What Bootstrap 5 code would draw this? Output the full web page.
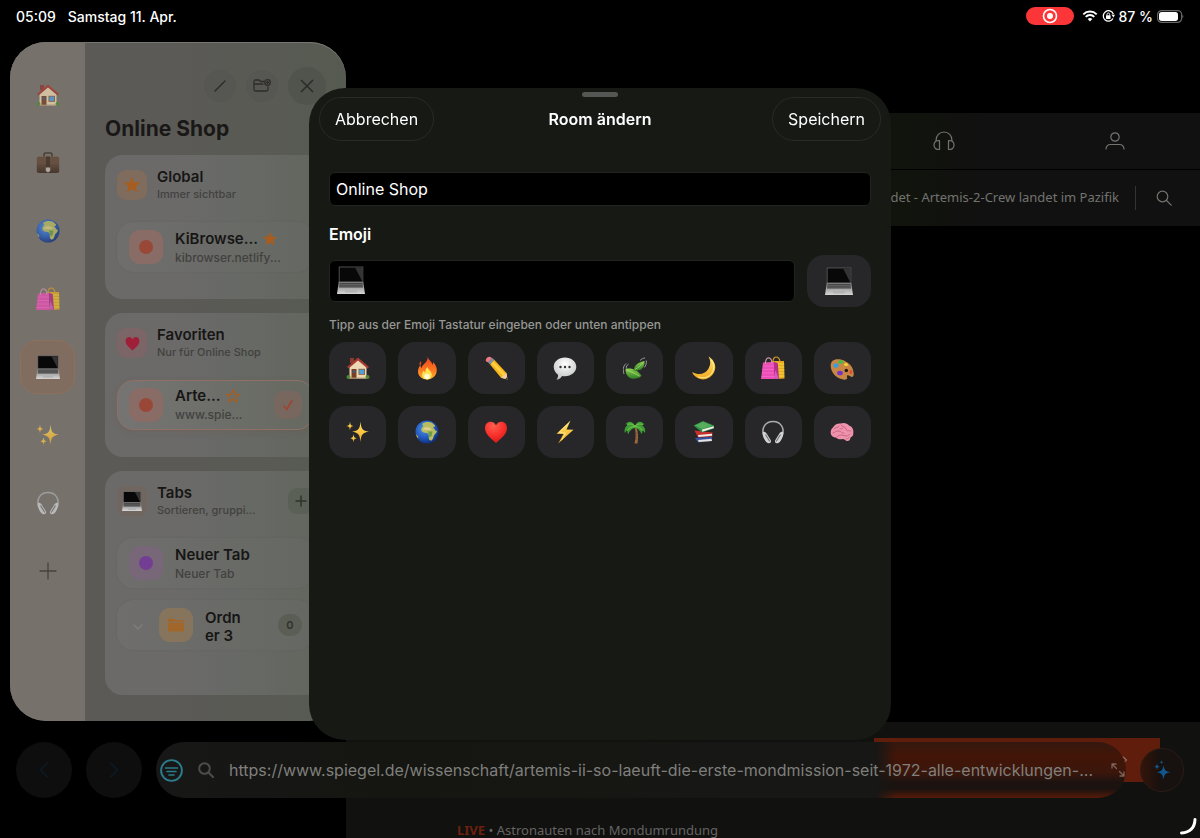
<!DOCTYPE html>
<html lang="de">
<head>
<meta charset="utf-8">
<meta name="viewport" content="width=device-width, initial-scale=1">
<title>Room ändern</title>
<link href="https://cdn.jsdelivr.net/npm/bootstrap@5.3.0/dist/css/bootstrap.min.css" rel="stylesheet">
<style>
  body { background: #000; color: #fff; font-family: Inter, "Liberation Sans", sans-serif; font-size: 16px; overflow: hidden; }
  a { text-decoration: none; }
  button { border: 0; padding: 0; color: inherit; }
  svg { display: block; flex: none; }
  .line { fill: none; stroke: currentColor; stroke-linecap: round; stroke-linejoin: round; }
  .e16 { width: 16px; height: 16px; } .e20 { width: 20px; height: 20px; }
  .e24 { width: 24px; height: 24px; } .e28 { width: 28px; height: 28px; }

  /* status bar */
  .status { height: 42px; padding: 0 16px 10px; font-size: 14px; font-weight: 500; }
  .rec { width: 48px; height: 18px; background: #fc3638; }

  /* sidebar */
  .side { width: 336px; margin: 0 0 117px 10px; border-radius: 36px; overflow: hidden; background: linear-gradient(90deg, #5c5a57 30%, #5a5a55 65%, #565b51); box-shadow: inset 0 1px #777672; z-index: 1; }
  .rail { width: 75px; padding-top: 26px; gap: 14px; background: #77716b; }
  .rail button { width: 55px; height: 54px; border-radius: 17px; background: none; color: #45423e; }
  .rail svg { opacity: .75; }
  .rail .on { background: #806d60; border: 1px solid #8f705c; }
  .rail .on svg, .rail .full { opacity: 1; }
  .panel { padding: 25px 20px 26px; min-width: 0; }
  .tools { gap: 10px; }
  .tool { width: 32px; height: 32px; background: #565652; color: #2d2c2a; }
  .tool.big { width: 38px; height: 38px; background: #51544c; }
  .panel h1 { font-size: 21px; line-height: 28px; font-weight: 700; color: #191817; margin: 10px 0 12px; }
  .groups { gap: 14px; }
  .group { border-radius: 18px; background: linear-gradient(90deg, #6b6a69 30%, #676965 65%, #61665d); padding: 15px 12px 27px; }
  .gicon { width: 30px; height: 30px; border-radius: 9px; background: #70665f; }
  .gicon.amber { background: #7f6c5d; } .gicon.rose { background: #7b6566; }
  .ghead { gap: 10px; margin-bottom: 22px; height: 30px; }
  .t1 { font-size: 15px; line-height: 18px; font-weight: 600; color: #171615; white-space: nowrap; }
  .t2 { font-size: 12px; line-height: 18px; font-weight: 500; color: #42413f; white-space: nowrap; }
  .ghead .t2 { font-size: 11px; line-height: 16px; }
  .entry .t2 { line-height: 20px; }
  .entry { height: 50px; border-radius: 17px; padding: 3px 12px 0; gap: 12px; background: linear-gradient(90deg, #6f6e6d, #656862); box-shadow: 0 0 3px #0000000f; }
  .entry.on { background: linear-gradient(90deg, #757473, #666960); border: 1px solid #8f7067; padding: 2px 11px 0; box-shadow: 0 2px 6px #7a403026; }
  .entry + .entry { margin-top: 12px; }
  .eicon { width: 34px; height: 34px; border-radius: 11px; margin-top: -3px; }
  .disc { width: 14px; height: 14px; }
  .salmon { background: #8a6c66; } .salmon .disc { background: #994838; }
  .lilac { background: #786779; } .lilac .disc { background: #743d94; }
  .ochre { background: #86755c; }
  .check { width: 28px; height: 28px; border-radius: 9px; background: #78675f; color: #9f4430; margin-top: -3px; }
  .plus { width: 26px; height: 26px; border-radius: 9px; background: #5b6057; color: #30322d; }
  .count { width: 24px; height: 22px; font-size: 11px; font-weight: 600; background: #5a5e55; color: #30322d; margin-top: -3px; }

  /* web page behind */
  .web { font-family: "Noto Sans", sans-serif; padding-top: 71px; min-width: 0; color: #626260; }
  .band { height: 56px; background: linear-gradient(90deg, #11140c 65%, #111 75%); color: #73736f; }
  .band + .band { margin-top: 1px; }
  .band > .fifth { width: 20%; }
  .ticker { font-size: 13px; }
  .vr-line { width: 1px; height: 24px; background: #333; }
  .story { height: 116px; background: #111110; }
  .promo { width: 286px; height: 44px; margin: 16px 40px 0 0; background: #611d0b; color: #8d6f67; padding-right: 32px; }
  .live { font-size: 13px; line-height: 16px; margin: 40px 0 0 111px; color: #646462; }
  .live b { color: #6b210e; }

  /* floating address bar */
  .dock { bottom: 40px; padding: 0 16px; gap: 14px; z-index: 2; }
  .round { width: 56px; height: 56px; background: #0e0e0e; color: #0c1b27; }
  .address { height: 56px; min-width: 0; gap: 15px; padding: 0 1px 0 4px; background:
      linear-gradient(90deg, #161715, #16171500) right 230px top / 20px 100% no-repeat,
      linear-gradient(#34180f, #431508 25%, #3a160b 55%, #1c1310 72%, #1c1310 84%, #571a09) right top / 250px 100% no-repeat,
      linear-gradient(90deg, #171717, #151611 25%, #171715 60%); }
  .address input { font-size: 16px; border: 0; background: none; color: #7f7f7c; min-width: 0; padding: 0; }
  .spark { width: 44px; height: 44px; background: linear-gradient(90deg, #351409, #17110f 45%); border: 1px solid #2b1c17; }
  .turn { right: 3px; bottom: 3px; z-index: 3; }

  /* sheet */
  .modal-dialog { max-width: 582px; margin: 88px auto 0; }
  .sheet { border: 0; border-radius: 36px; background: #171915; min-height: 652px; padding: 4px 10px 0; color: #fff; }
  .grab { width: 36px; height: 5px; background: #545754; }
  .pill { height: 44px; padding: 0 15px; border: 1px solid #292b25; background: #171915; font-size: 16px; }
  .sheet-title { font-size: 16px; line-height: 20px; font-weight: 600; }
  .fields { padding: 31px 10px 0; }
  .field { background: #000; border: 1px solid #22241f; border-radius: 6px; color: #fff; padding: 0 6px; font-size: 16px; box-shadow: none; }
  .field:focus { background: #000; color: #fff; }
  .h34 { height: 34px; } .h42 { height: 42px; }
  .lab { font-size: 16px; line-height: 20px; font-weight: 600; margin: 18px 0 11px; }
  .pick { gap: 12px; }
  .glyph { left: 8px; top: 6px; }
  .tile { height: 52px; border-radius: 17px; background: #272729; }
  .tile.wide { width: 64px; }
  .hint { font-size: 12px; line-height: 16px; font-weight: 500; color: #969794; margin: 10px 0 9px; }
  .tiles { display: grid; grid-template-columns: repeat(8, 1fr); gap: 12px; }
</style>
</head>
<body>

<svg width="0" height="0" class="position-absolute" aria-hidden="true">
  <defs>
    <linearGradient id="gFire" x1="0" y1="0" x2="0" y2="1"><stop offset="0" stop-color="#f0401c"/><stop offset=".6" stop-color="#fb7a20"/><stop offset="1" stop-color="#fdb52c"/></linearGradient>
    <linearGradient id="gGold" x1="0" y1="0" x2="0" y2="1"><stop offset="0" stop-color="#ffe36a"/><stop offset="1" stop-color="#f3a81f"/></linearGradient>
    <radialGradient id="gSea" cx=".4" cy=".35" r=".7"><stop offset="0" stop-color="#4b96e8"/><stop offset=".6" stop-color="#2257bd"/><stop offset="1" stop-color="#0c2a72"/></radialGradient>
    <radialGradient id="gHeart" cx=".4" cy=".2" r=".9"><stop offset="0" stop-color="#ff5f50"/><stop offset=".5" stop-color="#f8302b"/><stop offset="1" stop-color="#cf1518"/></radialGradient>
    <radialGradient id="gBub" cx=".5" cy=".3" r=".8"><stop offset="0" stop-color="#fff"/><stop offset="1" stop-color="#b9babb"/></radialGradient>
    <linearGradient id="gKey" x1="0" y1="0" x2="0" y2="1"><stop offset="0" stop-color="#777"/><stop offset="1" stop-color="#d6d6d6"/></linearGradient>
    <linearGradient id="gLeaf" x1="0" y1="0" x2="0" y2="1"><stop offset="0" stop-color="#8bd04e"/><stop offset="1" stop-color="#2f7d24"/></linearGradient>
    <linearGradient id="gCase" x1="0" y1="0" x2="0" y2="1"><stop offset="0" stop-color="#76563f"/><stop offset="1" stop-color="#38251a"/></linearGradient>
  </defs>
  <symbol id="house" viewBox="0 0 24 24"><path d="M4 2h4v5H4z" fill="#8c3a30"/><path d="M3.500 10 12 3l8.500 7v12.500h-17z" fill="#ecd9b4"/><path d="M12 1.500 23 11l-1.500 1.500L12 4.500 2.500 12.500 1 11z" fill="#a83a32"/><path d="M5.500 13h5v9.500h-5z" fill="#7a4027"/><path d="M6.700 14.300h2.600v2.700H6.700z" fill="#3d5d78"/><path d="M12.500 12.800h6.500v6h-6.500z" fill="#8b5a38"/><path d="M13.300 13.600h4.900v4.400h-4.900z" fill="#4f9fdb"/><circle cx="2.500" cy="21" r="2" fill="#4f8b2f"/><circle cx="21.500" cy="21" r="2" fill="#4f8b2f"/><path d="M3.500 21.600h17v1h-17z" fill="#b39a78"/></symbol>
  <symbol id="fire" viewBox="0 0 24 24"><path d="M12.500.5c.6 3 4.700 5.200 5 8.500.5-.8.700-2 .500-3 3 3 4.500 6.500 3.500 10.500-1 4-5 7-9.300 7-5 0-9.200-3.300-9.200-8 0-3 1-4.500 2.300-6.500.3 1.500.7 2.300 1.400 3C7 8 13.500 6.500 12.500.5z" fill="url(#gFire)"/><path d="M4.500 7.500c0 1 .2 1.600.7 2.300.9-1.300 1.300-2.800.8-4.600-.8.700-1.500 1.500-1.500 2.300z" fill="#f0481d"/><path d="M12.500 11c.4 2.600 4.300 4.300 4.300 7.800 0 3-2.200 4.700-4.700 4.700-2.600 0-5-1.700-5-4.700 0-2 .9-3 1.700-4.200.3 1 .8 1.600 1.400 2 .2-2.200.5-4.200 2.300-5.600z" fill="#ffe052"/><ellipse cx="12" cy="20.500" rx="2.800" ry="2.800" fill="#fffbd0"/></symbol>
  <symbol id="pencil" viewBox="0 0 24 24"><path d="m6 8.500 4-5L22.500 17l.8 6.300-6.300-1.500z" fill="#f5b41e"/><path d="m7.300 7.500 1.800-2.300L21.500 18l-2.200 2.200z" fill="#ffcf3d"/><path d="m6 8.500-1.800-2L8.300 2l1.900 1.800z" fill="#8295a8"/><path d="M4.200 6.500 2 5.200C.8 3.500 3.500.2 5.600.7L8.300 2z" fill="#ec7b86"/><path d="m17 21.800 5.500-4.800 1 6.500z" fill="#eecfa2"/><path d="m21.300 22.900 1.900-1.800.3 2.400z" fill="#343434"/></symbol>
  <symbol id="bubble" viewBox="0 0 24 24"><path d="M12 1.500c6.300 0 11.300 4 11.300 9.300s-5 9.400-11.300 9.400c-1 0-2-.1-2.900-.3-1 1.800-2.900 3.300-5.600 3.800 1.300-1.500 1.700-3.200 1.500-5C2.500 17 .7 14.200.7 10.800.7 5.500 5.700 1.500 12 1.500z" fill="url(#gBub)"/><g fill="#333"><circle cx="7.500" cy="11" r="1.200"/><circle cx="12" cy="11" r="1.200"/><circle cx="16.500" cy="11" r="1.200"/></g></symbol>
  <symbol id="leaf" viewBox="0 0 24 24"><path d="M2.500 13C8 11.500 15 14 18.500 20c-3.500 3-10 4-13 1C3.500 19 2.300 16 2.500 13z" fill="url(#gLeaf)"/><path d="M10.500 14.500c1-5.500 5-8.500 11-9.500.5 6.500-4 10.500-11 9.500z" fill="url(#gLeaf)"/><path d="M3.500 14c4 1.500 8.500 3.500 13 6M12 13.500c3-1.500 6-4.500 8-7" fill="none" stroke="#b7e27f" stroke-width=".7"/><path d="M1 18C-.3 13.500 0 10.500 3 7.500M3.200 12.500c0-2 .8-3.500 2.300-4.500M17 4.500c1.500-1.500 3-2.300 5-2.500M23.300 4.500c.3 3-.3 5-2 7" fill="none" stroke="#a5aaa5" stroke-width=".9"/></symbol>
  <symbol id="moon" viewBox="0 0 24 24"><path d="M16.500.5c6 3.500 8.500 10 5.500 15.800C18.500 23.500 10 25.500 4 21c-2-1.500-3.200-3-3.700-5 6 3.500 12.500 2.500 16-3 2.500-4 2.500-8.500.2-12.500z" fill="url(#gGold)"/><path d="M19 4c3 4 3.500 8.500 1.200 12.500-3 5-8.700 6.500-14 4.300" fill="none" stroke="#fff0a0" stroke-width="1"/></symbol>
  <symbol id="bags" viewBox="0 0 24 24"><path d="M11 5h12l.5 17.500-8 .5z" fill="#e4ac1e"/><path d="M12 8h11.200M12 11h11.200M12 14h11.300M12 17h11.300M12 20h11.300" stroke="#f7d84a" stroke-width="1.200"/><path d="M12 5.500c0-6 6-6 7 0" fill="none" stroke="#d99c28" stroke-width="1.200"/><path d="m2 6.500 11.500-.8L16.500 23H0z" fill="#eb4fb7"/><path d="m13 5.800 3.800 1.500L18 23h-5z" fill="#b52f8b"/><path d="m14.500 14 3.200 8.800H12.500z" fill="#d95bb8"/><path d="M4.500 8C4 0 10.500 0 11 7.500" fill="none" stroke="#c99aa8" stroke-width="1.200"/><path d="M2 10h11M1.600 13.500h11.500M1 17h12M.5 20.500h12.500" stroke="#ff7bd0" stroke-width=".5"/></symbol>
  <symbol id="palette" viewBox="0 0 24 24"><path d="M3 4.500C8 1.500 17 4 21.500 10.500 23.500 14 24.500 19 23 20.500c-1.600 1.500-4-1.800-5.500-1.200-1.500.5.700 3.200-1 4-2.500 1-8-.3-11.500-3.800C.5 15-1 7.500 3 4.500z" fill="#c88743"/><ellipse cx="6" cy="9.500" rx="2.600" ry="2.300" fill="#3c9ce0"/><ellipse cx="10.800" cy="6" rx="2.500" ry="1.900" fill="#43bd46"/><ellipse cx="16" cy="8.500" rx="2" ry="1.600" fill="#f5d331"/><ellipse cx="10" cy="17" rx="2.900" ry="2.300" fill="#7634c4"/><ellipse cx="20.800" cy="16" rx="1.500" ry="1.900" fill="#e5483b"/><circle cx="16.300" cy="14.500" r="1.800" fill="#241b12"/></symbol>
  <symbol id="sparkles" viewBox="0 0 24 24"><g fill="url(#gGold)"><path d="M14.500 1.500c.7 7.300 1.800 9.500 8.500 10.200-6.700.8-7.800 3-8.500 10.300-.7-7.300-1.800-9.500-8.500-10.300 6.700-.7 7.800-2.900 8.500-10.200z"/><path d="M4 1.500c.3 3.200.8 4.100 3.500 4.500-2.700.4-3.200 1.300-3.500 4.500C3.700 7.300 3.200 6.400.5 6 3.200 5.600 3.700 4.700 4 1.500z"/><path d="M7.500 14c.3 3 .8 3.800 3.300 4.200-2.500.4-3 1.200-3.300 4.300-.3-3.100-.8-3.900-3.300-4.300 2.500-.4 3-1.200 3.300-4.200z"/></g></symbol>
  <symbol id="globe" viewBox="0 0 24 24"><circle cx="12" cy="12" r="11.500" fill="url(#gSea)"/><path d="M7.500 3.500c2-2 7-2 9.500-.8l3 2.800c.5 1.500-1 1.300-2 1.500l2.500 3.500 1.500.5c-.5 2.500-2.300 3-3 4.500s-.5 3-2 4.500c-1 1-2.500.5-3-1-.6-1.800.2-3.300-.7-5C12.500 12.500 9 13.500 7 11.500 5.500 9.500 7 7 8.500 6c-.8-.8-1.500-1.500-1-2.500z" fill="#b8bd62"/><path d="M8.500 8c2-1.500 6-1 8 1l-1 1.500c-2.500-.8-5-.3-7.500-.5z" fill="#ddd08d"/><path d="M13 11.500h4.500l-1 4.500-2 1.500z" fill="#6c9c45"/><path d="M1 14.500c1.500.5 2.500 2 2.200 4L2 17z" fill="#c7b83e"/></symbol>
  <symbol id="heart" viewBox="0 0 24 24"><path d="M12 23C6 17.500 1 14 1 8c0-4 2.500-6.300 5.700-6.300 2.500 0 4.500 1.500 5.300 3.800.8-2.300 2.800-3.800 5.300-3.800C20.500 1.700 23 4 23 8c0 6-5 9.500-11 15z" fill="url(#gHeart)"/></symbol>
  <symbol id="bolt" viewBox="0 0 24 24"><path d="m17.500.5-14 13.300 7 .2-5.300 9.500L20.500 9.800l-7-.3z" fill="url(#gGold)"/><path d="M15.500 3.500 6 12.500l6.500.5-4 7.300" fill="none" stroke="#fff09a" stroke-width=".8"/></symbol>
  <symbol id="palm" viewBox="0 0 24 24"><path d="M11.500 7c1.500 5 1.500 10.500 0 16.500h3c1-6 .8-11.500-1.200-16.500z" fill="#9a6a3c"/><path d="M12 13h2.500M12 16h2.500M12 19h2.500" stroke="#6b4423" stroke-width=".7"/><path d="M12 6C9.500 1 5 .5 2.500 4.500 4 4 5 4.300 5.500 4.800 2.500 6 1 9 1.800 13c1-1.500 1.700-2.300 2.700-2.600-.2 1.500 0 2.700.7 3.800C7 10 9.500 8.500 12 8c2.500.5 5 2 6.500 6 .8-1 1-2.200.8-3.500 1.200.4 2 1.500 2.700 2.700.8-4-.7-7.200-3.700-8.200.8-.5 2-.7 3.200-.3C19 .5 14 .5 12 6z" fill="#3f9c34"/><path d="M12 6C9 3.500 6.500 3.500 4 5M12 6.500C8.500 6.500 6 8 4.500 10.500M12 6c3-2.500 5.500-2.500 8-1M12 6.500c3.500 0 6 1.500 7.300 4" fill="none" stroke="#84cf56" stroke-width=".8"/></symbol>
  <symbol id="books" viewBox="0 0 24 24"><path d="m3 18 3 4.500 14-1.500v-4.500z" fill="#334f9f"/><path d="m6 20 13.500-1.300.5 2.200L6.700 22z" fill="#e6e3db"/><path d="m2.500 10.500 3.500 7 14.500-1v-4z" fill="#c72e2e"/><path d="m6 15 14-1.200v2L6.500 17z" fill="#efece4"/><path d="M1.500 5.500 11 1l11 4.500v3L10 12.500z" fill="#2f8f48"/><path d="m3 5.500 8-3.700L20.500 5.700 9.800 9z" fill="#56ad5b"/><path d="m10 9.500 11.700-3.300.2 1.900L10.200 11.700z" fill="#f1eee5"/></symbol>
  <symbol id="phones" viewBox="0 0 24 24"><path d="M3 16C-.5 7.500 5 1.500 12 1.500S24.500 7.500 21 16" fill="none" stroke="#a9acae" stroke-width="1.500"/><path d="M1.800 12c1-.6 2.800 0 4 1.700l4 6.500c.8 1.600-.3 3.300-2 3-1.500-.2-2.500-1-3.500-2.500C2.500 18 1 14.500 1.800 12z" fill="#d0d2d3"/><path d="M22.200 12c-1-.6-2.800 0-4 1.700l-4 6.500c-.8 1.600.3 3.300 2 3 1.500-.2 2.500-1 3.500-2.500 1.800-2.700 3.300-6.200 2.500-8.700z" fill="#d0d2d3"/><path d="m4.500 14.500 4.300 7M19.500 14.500l-4.300 7" stroke="#74787b" stroke-width="1.200"/></symbol>
  <symbol id="brain" viewBox="0 0 24 24"><path d="M3 7.500C4.500 4.500 8 3 10.500 3.500c3-1.300 7-.5 8.500 2 3 .8 4.800 4 4.300 7 .4 2.500-1 4.500-2.800 5-.2 2.700-2 4-3.500 3.500-1.500-.3-2-1.500-4-2-3 .8-6 0-7-1.500-3.500 0-5.500-2.500-5.300-5.500C.9 10 1.700 8.300 3 7.500z" fill="#ee93ad"/><path d="M4 9c2-2 4-1 5-3M3 13c2-.5 3-2.500 6-2s2 2.500 5 2M11 5c1 2 4 1 5 4s3 1 5 2M7 17c1-2 4-2.500 7-1.500s4 .5 6-1.500M13 8c-1 1-2 1-3 .5M16 19c1 0 2-.5 3-1.500" fill="none" stroke="#c8607f" stroke-width=".9" stroke-linecap="round"/></symbol>
  <symbol id="case" viewBox="0 0 24 24"><path d="M8 6V3.200C8 2.300 8.500 2 9.500 2h5c1 0 1.500.3 1.500 1.200V6" fill="none" stroke="#3d3028" stroke-width="1.600"/><rect x=".8" y="5.500" width="22.400" height="16.500" rx="2" fill="url(#gCase)"/><path d="M1 6h22l-.5 7H1.500z" fill="#5f4534"/><path d="M10 5.500h4V17h-4z" fill="#3c2a20"/><path d="M9.800 16.500h4.400v3.500L12 21.500 9.800 20z" fill="#bdb8b0"/></symbol>
  <symbol id="laptop" viewBox="0 0 24 24"><path d="M1.500.5h21v14h-21z" fill="#5f5f60"/><path d="M2.200 1.200h19.600v12.300H2.200z" fill="#080808"/><path d="M15.500 1.200h6.300v12.300z" fill="#333"/><path d="M1.500 13.500h21L24 24H0z" fill="url(#gKey)"/><path d="M2.300 14.500h19.400l.6 4H1.700z" fill="#444"/><path d="M2.200 15.800h19.600M2 17.200h20" stroke="#888" stroke-width=".4"/><path d="M7 19.500h10v3.200H7z" fill="#b3b3b3"/></symbol>
  <symbol id="star" viewBox="0 0 24 24"><path d="M12 1 14.800 8.600 22.900 8.900 16.600 14 18.800 21.800 12 17.300 5.200 21.800 7.400 14 1.100 8.900 9.200 8.600z"/></symbol>
  <symbol id="lens" viewBox="0 0 16 16"><circle cx="6.500" cy="6.500" r="5.300" class="line"/><path d="m10.500 10.500 4.700 4.700" class="line"/></symbol>
</svg>

<div class="min-vh-100 d-flex flex-column position-relative">
  <header class="status d-flex align-items-center justify-content-between">
    <div class="d-flex gap-2"><span>05:09</span><span class="ms-1">Samstag 11. Apr.</span></div>
    <div class="d-flex align-items-center">
      <span class="rec rounded-pill d-flex align-items-center justify-content-center me-2"><svg width="16" height="16" viewBox="0 0 16 16"><circle cx="8" cy="8" r="6.500" fill="none" stroke="#fff" stroke-width="1.600"/><circle cx="8" cy="8" r="3" fill="#fff"/></svg></span>
      <svg width="16" height="12" viewBox="0 0 16 12" class="me-1"><path d="M1.300 4.300a9.500 9.500 0 0 1 13.400 0M3.700 6.800a6 6 0 0 1 8.600 0" fill="none" stroke="#fff" stroke-width="1.900"/><path d="M8 11.500 5.700 9.100a3.300 3.300 0 0 1 4.600 0z" fill="#fff"/></svg>
      <svg width="13" height="14" viewBox="0 0 13 14" class="me-1"><path d="M11.300 5A5.200 5.200 0 1 0 11 9.500" fill="none" stroke="#fff" stroke-width="1.300"/><path d="m9.300 5.500 3.700.2-1.500 2.800z" fill="#fff"/><rect x="4" y="6.300" width="4.600" height="3.600" rx=".6" fill="#fff"/><path d="M5 6.500V5.300a1.300 1.300 0 0 1 2.600 0v1.200" fill="none" stroke="#fff" stroke-width=".9"/></svg>
      <span class="me-1">87 %</span>
      <svg width="27" height="13" viewBox="0 0 27 13"><rect x=".6" y=".6" width="24" height="11.800" rx="4" fill="none" stroke="#666" stroke-width="1.200"/><rect x="2" y="2" width="19" height="9" rx="2.700" fill="#fff"/><path d="M25.500 4.500q1.600 2 0 4z" fill="#777"/></svg>
    </div>
  </header>

  <div class="d-flex flex-grow-1">
    <aside class="side d-flex flex-shrink-0">
      <nav class="rail d-flex flex-column align-items-center flex-shrink-0" aria-label="Rooms">
        <button class="d-flex align-items-center justify-content-center" aria-label="Zuhause"><svg class="e24"><use href="#house"/></svg></button>
        <button class="d-flex align-items-center justify-content-center" aria-label="Arbeit"><svg class="e24"><use href="#case"/></svg></button>
        <button class="d-flex align-items-center justify-content-center" aria-label="Welt"><svg class="e24"><use href="#globe"/></svg></button>
        <button class="d-flex align-items-center justify-content-center" aria-label="Einkaufen"><svg class="e24"><use href="#bags"/></svg></button>
        <button class="on d-flex align-items-center justify-content-center" aria-label="Online Shop"><svg class="e24"><use href="#laptop"/></svg></button>
        <button class="d-flex align-items-center justify-content-center" aria-label="Neues"><svg class="e24"><use href="#sparkles"/></svg></button>
        <button class="d-flex align-items-center justify-content-center" aria-label="Musik"><svg class="e24"><use href="#phones"/></svg></button>
        <button class="d-flex align-items-center justify-content-center" aria-label="Room hinzufügen"><svg class="full line" width="18" height="18" viewBox="0 0 18 18" stroke-width="1.300"><path d="M9 1v16M1 9h16"/></svg></button>
      </nav>
      <div class="panel flex-grow-1 d-flex flex-column">
        <div class="tools d-flex align-items-center justify-content-end">
          <button class="tool rounded-circle d-flex align-items-center justify-content-center" aria-label="Bearbeiten"><svg class="line" width="14" height="14" viewBox="0 0 14 14" stroke-width="1.500"><path d="m2 12 8.500-8.500M11.500 2.500l.5-.5"/></svg></button>
          <button class="tool rounded-circle d-flex align-items-center justify-content-center" aria-label="Neuer Ordner"><svg class="line" width="18" height="16" viewBox="0 0 18 16" stroke-width="1.300"><path d="M10.500 3.500H7.500L6 2H2.500Q1 2 1 3.500v8Q1 13 2.500 13h11q1.500 0 1.500-1.500V9M1 6h9"/><circle cx="14.500" cy="4.500" r="2.800"/><path d="M14.500 3.500v2M13.500 4.500h2"/></svg></button>
          <button class="tool big rounded-circle d-flex align-items-center justify-content-center" aria-label="Schließen"><svg class="line" width="14" height="14" viewBox="0 0 14 14" stroke-width="1.700"><path d="m1.500 1.500 11 11M12.500 1.500l-11 11"/></svg></button>
        </div>
        <h1>Online Shop</h1>
        <div class="groups d-flex flex-column flex-grow-1">
          <section class="group">
            <div class="ghead d-flex align-items-center">
              <span class="gicon amber d-flex align-items-center justify-content-center"><svg width="18" height="18" fill="#a85d1e"><use href="#star"/></svg></span>
              <div><div class="t1">Global</div><div class="t2">Immer sichtbar</div></div>
            </div>
            <div class="entry d-flex align-items-center">
              <span class="eicon salmon d-flex align-items-center justify-content-center"><i class="disc rounded-circle"></i></span>
              <div><div class="t1 d-flex align-items-center gap-1">KiBrowse...<svg class="e16" fill="#a85d1e"><use href="#star"/></svg></div><div class="t2">kibrowser.netlify...</div></div>
            </div>
          </section>
          <section class="group">
            <div class="ghead d-flex align-items-center">
              <span class="gicon rose d-flex align-items-center justify-content-center"><svg width="15" height="15" viewBox="0 0 24 24"><path d="M12 23C6 17.500 1 14 1 8c0-4 2.500-6.300 5.700-6.300 2.500 0 4.500 1.500 5.300 3.800.8-2.300 2.800-3.800 5.300-3.800C20.500 1.700 23 4 23 8c0 6-5 9.500-11 15z" fill="#a01f38"/></svg></span>
              <div><div class="t1">Favoriten</div><div class="t2">Nur für Online Shop</div></div>
            </div>
            <div class="entry on d-flex align-items-center">
              <span class="eicon salmon d-flex align-items-center justify-content-center"><i class="disc rounded-circle"></i></span>
              <div><div class="t1 d-flex align-items-center gap-1">Arte...<svg class="e16" viewBox="0 0 24 24" fill="none" stroke="#a85d1e" stroke-width="1.800" stroke-linejoin="round"><path d="M12 2.500 14.500 9.200 21.700 9.500 16 14 18 21 12 17 6 21 8 14 2.300 9.500 9.500 9.200z"/></svg></div><div class="t2">www.spie...</div></div>
              <span class="check d-flex align-items-center justify-content-center ms-auto"><svg class="line" width="12" height="12" viewBox="0 0 12 12" stroke-width="1.500"><path d="m2 7 2.800 3.500L10 1.500"/></svg></span>
            </div>
          </section>
          <section class="group flex-grow-1">
            <div class="ghead d-flex align-items-center">
              <span class="gicon d-flex align-items-center justify-content-center"><svg class="e20"><use href="#laptop"/></svg></span>
              <div><div class="t1">Tabs</div><div class="t2">Sortieren, gruppi...</div></div>
              <button class="plus ms-auto d-flex align-items-center justify-content-center" aria-label="Neuer Tab"><svg class="line" width="12" height="12" viewBox="0 0 12 12" stroke-width="1.500"><path d="M6 1v10M1 6h10"/></svg></button>
            </div>
            <div class="entry d-flex align-items-center">
              <span class="eicon lilac d-flex align-items-center justify-content-center"><i class="disc rounded-circle"></i></span>
              <div><div class="t1">Neuer Tab</div><div class="t2">Neuer Tab</div></div>
            </div>
            <div class="entry d-flex align-items-center">
              <svg class="ms-1 me-1" width="10" height="8" viewBox="0 0 10 8" fill="none" stroke="#7d7d7b" stroke-width="1.500" stroke-linecap="round" stroke-linejoin="round"><path d="m1 2 4 4 4-4"/></svg>
              <span class="eicon ochre d-flex align-items-center justify-content-center"><svg width="16" height="14" viewBox="0 0 16 14" fill="#a3662a"><path d="M0 2Q0 .5 1.500.5h4L7 2h7.500Q16 2 16 3.500v.3H0zM0 4.800h16v7q0 1.700-1.600 1.700H1.600Q0 13.500 0 11.800z"/></svg></span>
              <div class="t1">Ordn<br>er 3</div>
              <span class="count rounded-pill d-flex align-items-center justify-content-center ms-auto">0</span>
            </div>
          </section>
        </div>
      </div>
    </aside>

    <main class="web flex-grow-1 d-flex flex-column">
      <nav class="band d-flex align-items-center justify-content-end">
        <a href="#" class="fifth d-flex justify-content-center text-reset" aria-label="Audio"><svg class="line" width="22" height="20" viewBox="0 0 22 20" stroke-width="1.200"><path d="M3 10V9.500C3 4.500 6.500 1 11 1s8 3.500 8 8.500v.5M6.500 9.500v9C3 18.700 1 17 1 14s2-4.700 5.500-4.500zM15.500 9.500v9c3.500.2 5.500-1.500 5.500-4.500s-2-4.700-5.500-4.500z"/></svg></a>
        <a href="#" class="fifth d-flex justify-content-center text-reset" aria-label="Konto"><svg class="line" width="20" height="18" viewBox="0 0 20 18" stroke-width="1.200"><circle cx="10" cy="5" r="4.200"/><path d="M1 17c.3-3 2-4.500 4.500-4.500h9c2.500 0 4.200 1.500 4.500 4.500"/></svg></a>
      </nav>
      <div class="band d-flex align-items-center justify-content-end pe-4">
        <a href="#" class="ticker text-reset text-nowrap me-3">det - Artemis-2-Crew landet im Pazifik</a>
        <span class="vr-line me-3"></span>
        <a href="#" class="text-reset ms-1 pe-1" aria-label="Suche"><svg width="16" height="16" stroke-width="1.200"><use href="#lens"/></svg></a>
      </div>
      <div class="flex-grow-1"></div>
      <section class="story">
        <div class="d-flex justify-content-end"><a href="#" class="promo d-flex align-items-center justify-content-end" aria-label="Weiter"><svg class="line" width="6" height="8" viewBox="0 0 6 8" stroke-width="1.300"><path d="m1 1 3.500 3L1 7"/></svg></a></div>
        <p class="live"><b>LIVE</b>&nbsp;•&nbsp;Astronauten nach Mondumrundung</p>
      </section>
    </main>
  </div>

  <div class="dock position-absolute start-0 end-0 d-flex align-items-center">
    <button class="round rounded-circle d-flex align-items-center justify-content-center flex-shrink-0" aria-label="Zurück"><svg class="line" width="10" height="16" viewBox="0 0 10 16" stroke-width="1.700"><path d="M8.500 1 1.500 8l7 7"/></svg></button>
    <button class="round rounded-circle d-flex align-items-center justify-content-center flex-shrink-0" aria-label="Vor"><svg class="line" width="10" height="16" viewBox="0 0 10 16" stroke-width="1.700"><path d="m1.500 1 7 7-7 7"/></svg></button>
    <div class="address rounded-pill flex-grow-1 d-flex align-items-center">
      <svg class="line" width="23" height="23" viewBox="0 0 23 23" stroke-width="1.900" color="#2c7c8c"><circle cx="11.500" cy="11.500" r="10.400"/><path d="M5.500 9h12M7 12.500h9M9 16h5" stroke-width="1.600"/></svg>
      <svg width="16" height="16" stroke-width="2" color="#4d4d4b"><use href="#lens"/></svg>
      <input type="text" class="flex-grow-1" aria-label="Adresse" value="https://www.spiegel.de/wissenschaft/artemis-ii-so-laeuft-die-erste-mondmission-seit-1972-alle-entwicklungen-...">
      <svg class="line" width="14" height="14" viewBox="0 0 14 14" stroke-width="1.300" color="#80625a"><path d="M1 5V1h4M1 1l4.500 4.500M13 9v4H9M13 13 8.500 8.500"/></svg>
    </div>
    <button class="spark rounded-circle d-flex align-items-center justify-content-center flex-shrink-0" aria-label="Assistent"><svg width="20" height="20" viewBox="0 0 20 20" fill="#12568c"><path d="M11.500 5c.8 5 1.800 6.300 7 7.200-5.200.9-6.200 2.200-7 7.300-.8-5.100-1.800-6.400-7-7.300 5.200-.9 6.200-2.200 7-7.200zM5 3.500c.4 2.200.8 2.800 3 3.200-2.200.4-2.600 1-3 3.300-.4-2.300-.8-2.900-3-3.300 2.200-.4 2.600-1 3-3.200zM9.500 0c.3 1.500.5 2 2 2.200-1.500.3-1.700.7-2 2.200-.3-1.500-.5-1.900-2-2.200 1.500-.2 1.700-.7 2-2.200z"/></svg></button>
  </div>
  <svg class="turn position-absolute" width="18" height="18" viewBox="0 0 18 18"><path d="M16 2.500Q15.500 15 2.500 16" fill="none" stroke="#fff" stroke-width="3" stroke-linecap="round"/></svg>
</div>

<div class="modal show d-block" tabindex="-1" role="dialog" aria-labelledby="sheetTitle">
  <div class="modal-dialog">
    <form class="modal-content sheet">
      <div class="grab rounded-pill mx-auto"></div>
      <div class="d-flex align-items-center justify-content-between position-relative">
        <button type="button" class="pill rounded-pill">Abbrechen</button>
        <h2 id="sheetTitle" class="sheet-title m-0 position-absolute start-50 translate-middle-x">Room ändern</h2>
        <button type="submit" class="pill rounded-pill">Speichern</button>
      </div>
      <div class="fields">
        <input type="text" class="form-control field h34" aria-label="Name" value="Online Shop">
        <label for="emojiField" class="lab d-block">Emoji</label>
        <div class="pick d-flex align-items-center">
          <div class="position-relative flex-grow-1"><input id="emojiField" type="text" class="form-control field h42"><svg class="e28 glyph position-absolute"><use href="#laptop"/></svg></div>
          <button type="button" class="tile wide d-flex align-items-center justify-content-center" aria-label="Laptop"><svg class="e28"><use href="#laptop"/></svg></button>
        </div>
        <p class="hint">Tipp aus der Emoji Tastatur eingeben oder unten antippen</p>
        <div class="tiles">
          <button type="button" class="tile d-flex align-items-center justify-content-center" aria-label="Haus"><svg class="e24"><use href="#house"/></svg></button>
          <button type="button" class="tile d-flex align-items-center justify-content-center" aria-label="Feuer"><svg class="e24"><use href="#fire"/></svg></button>
          <button type="button" class="tile d-flex align-items-center justify-content-center" aria-label="Stift"><svg class="e24"><use href="#pencil"/></svg></button>
          <button type="button" class="tile d-flex align-items-center justify-content-center" aria-label="Sprechblase"><svg class="e24"><use href="#bubble"/></svg></button>
          <button type="button" class="tile d-flex align-items-center justify-content-center" aria-label="Blätter"><svg class="e24"><use href="#leaf"/></svg></button>
          <button type="button" class="tile d-flex align-items-center justify-content-center" aria-label="Mond"><svg class="e24"><use href="#moon"/></svg></button>
          <button type="button" class="tile d-flex align-items-center justify-content-center" aria-label="Einkaufstaschen"><svg class="e24"><use href="#bags"/></svg></button>
          <button type="button" class="tile d-flex align-items-center justify-content-center" aria-label="Palette"><svg class="e24"><use href="#palette"/></svg></button>
          <button type="button" class="tile d-flex align-items-center justify-content-center" aria-label="Funkeln"><svg class="e24"><use href="#sparkles"/></svg></button>
          <button type="button" class="tile d-flex align-items-center justify-content-center" aria-label="Erde"><svg class="e24"><use href="#globe"/></svg></button>
          <button type="button" class="tile d-flex align-items-center justify-content-center" aria-label="Herz"><svg class="e24"><use href="#heart"/></svg></button>
          <button type="button" class="tile d-flex align-items-center justify-content-center" aria-label="Blitz"><svg class="e24"><use href="#bolt"/></svg></button>
          <button type="button" class="tile d-flex align-items-center justify-content-center" aria-label="Palme"><svg class="e24"><use href="#palm"/></svg></button>
          <button type="button" class="tile d-flex align-items-center justify-content-center" aria-label="Bücher"><svg class="e24"><use href="#books"/></svg></button>
          <button type="button" class="tile d-flex align-items-center justify-content-center" aria-label="Kopfhörer"><svg class="e24"><use href="#phones"/></svg></button>
          <button type="button" class="tile d-flex align-items-center justify-content-center" aria-label="Gehirn"><svg class="e24"><use href="#brain"/></svg></button>
        </div>
      </div>
    </form>
  </div>
</div>

<script src="https://cdn.jsdelivr.net/npm/bootstrap@5.3.0/dist/js/bootstrap.bundle.min.js"></script>
</body>
</html>
